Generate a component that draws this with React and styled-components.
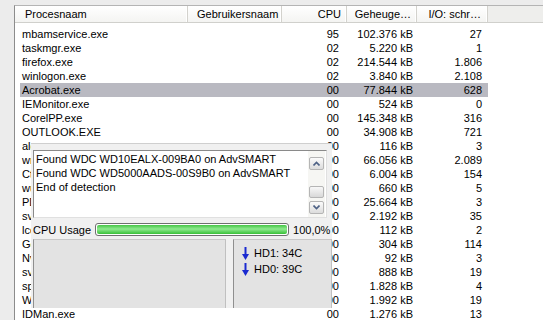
import React from "react";
import styled, { createGlobalStyle } from "styled-components";

const GlobalStyle = createGlobalStyle`
  html, body {
    margin: 0;
    padding: 0;
    background: #ececec;
    font-family: "Liberation Sans", Arial, sans-serif;
    font-size: 11px;
    color: #000;
    overflow: hidden;
  }
`;

const rows = [
  { name: "mbamservice.exe", cpu: "95", mem: "102.376 kB", io: "27" },
  { name: "taskmgr.exe", cpu: "02", mem: "5.220 kB", io: "1" },
  { name: "firefox.exe", cpu: "02", mem: "214.544 kB", io: "1.806" },
  { name: "winlogon.exe", cpu: "02", mem: "3.840 kB", io: "2.108" },
  { name: "Acrobat.exe", cpu: "00", mem: "77.844 kB", io: "628", selected: true },
  { name: "IEMonitor.exe", cpu: "00", mem: "524 kB", io: "0" },
  { name: "CorelPP.exe", cpu: "00", mem: "145.348 kB", io: "316" },
  { name: "OUTLOOK.EXE", cpu: "00", mem: "34.908 kB", io: "721" },
  { name: "alg.exe", cpu: "00", mem: "116 kB", io: "3" },
  { name: "wmiprvse.exe", cpu: "00", mem: "66.056 kB", io: "2.089" },
  { name: "Ctfmon.exe", cpu: "00", mem: "6.004 kB", io: "154" },
  { name: "wuauclt.exe", cpu: "00", mem: "660 kB", io: "5" },
  { name: "PDVDServ.exe", cpu: "00", mem: "25.664 kB", io: "3" },
  { name: "svchost.exe", cpu: "00", mem: "2.192 kB", io: "35" },
  { name: "lcdmon.exe", cpu: "00", mem: "112 kB", io: "2" },
  { name: "GoogleUpdate.exe", cpu: "00", mem: "304 kB", io: "114" },
  { name: "NvSvc32.exe", cpu: "00", mem: "92 kB", io: "3" },
  { name: "svchost.exe", cpu: "00", mem: "888 kB", io: "19" },
  { name: "spoolsv.exe", cpu: "00", mem: "1.828 kB", io: "4" },
  { name: "WLTRAY.EXE", cpu: "00", mem: "1.992 kB", io: "19" },
  { name: "IDMan.exe", cpu: "00", mem: "1.276 kB", io: "13" },
];

const log = [
  "Found WDC WD10EALX-009BA0 on AdvSMART",
  "Found WDC WD5000AADS-00S9B0 on AdvSMART",
  "End of detection",
];

const temps = ["HD1: 34C", "HD0: 39C"];

const Window = styled.div`
  position: relative;
  width: 543px;
  height: 320px;
  display: flex;
  padding-top: 5px;
  box-sizing: border-box;
`;

const LeftStrip = styled.div`
  width: 14px;
  flex-shrink: 0;
`;

const ListView = styled.div`
  flex: 1;
  background: #fff;
  border-left: 1px solid #8c8c8c;
  border-top: 1px solid #b4b4b4;
  overflow: hidden;
`;

const Header = styled.div`
  display: grid;
  grid-template-columns: 173px 94px 65px 70px 71px 1fr;
  height: 16px;
  border-bottom: 1px solid #d0d0cc;
  background: linear-gradient(#ffffff, #f4f4f2);
`;

const HeadCell = styled.div`
  position: relative;
  display: flex;
  align-items: center;
  justify-content: ${(p) => (p.$right ? "flex-end" : "flex-start")};
  padding: ${(p) => (p.$right ? `0 ${p.$pad}px 0 0` : `0 0 0 ${p.$pad}px`)};
  white-space: nowrap;
  border-right: ${(p) => (p.$filler ? "none" : "1px solid #d3d2cd")};
  background: ${(p) => (p.$filler ? "#eeeeec" : "transparent")};
  box-shadow: ${(p) => (p.$filler ? "none" : "inset -1px 0 0 #fff")};
`;

const Body = styled.div`
  padding-top: 4px;
`;

const Row = styled.div`
  display: grid;
  grid-template-columns: 168px 94px 65px 70px 71px;
  height: 14px;
  line-height: 14px;
  margin-left: 5px;
  width: 468px;
  background: ${(p) => (p.$selected ? "#b9b9c1" : "transparent")};
  white-space: nowrap;
`;

const Cell = styled.div`
  overflow: hidden;
  text-align: ${(p) => (p.$right ? "right" : "left")};
  padding: ${(p) => (p.$right ? `0 ${p.$pad}px 0 0` : `0 0 0 ${p.$pad}px`)};
`;

const Overlay = styled.div`
  position: absolute;
  left: 31px;
  top: 143px;
  width: 301px;
  height: 165px;
  background: #f0f0f0;
  border-top: 1px solid #cfcfcf;
  box-sizing: border-box;
  padding: 6px 0 0 2px;
  display: flex;
  flex-direction: column;
`;

const Memo = styled.div`
  width: 294px;
  height: 68px;
  box-sizing: border-box;
  background: #fff;
  border: 1px solid #8a8a8a;
  border-right-color: #e0e0e0;
  border-bottom-color: #e0e0e0;
  display: flex;
`;

const MemoText = styled.div`
  flex: 1;
  padding: 1px 2px;
  line-height: 14px;
  white-space: nowrap;
  overflow: hidden;
`;

const ScrollBar = styled.div`
  width: 17px;
  margin-right: 1px;
  background: #f6f6f3;
  display: flex;
  flex-direction: column;
  align-items: center;
  padding: 6px 0 3px;
  box-sizing: border-box;
`;

const ScrollBtn = styled.div`
  width: 15px;
  height: 13px;
  box-sizing: border-box;
  border: 1px solid #b5b5b5;
  border-radius: 2px;
  background: linear-gradient(#fbfbfb, #dcdcdc);
  display: flex;
  align-items: center;
  justify-content: center;
`;

const Thumb = styled.div`
  width: 15px;
  height: 12px;
  box-sizing: border-box;
  margin-top: auto;
  margin-bottom: 3px;
  border: 1px solid #b5b5b5;
  border-radius: 2px;
  background: linear-gradient(#f8f8f8, #d8d8d8);
`;

const UsageRow = styled.div`
  display: flex;
  align-items: center;
  height: 15px;
  margin-top: 4px;
  gap: 4px;
  white-space: nowrap;
`;

const Progress = styled.div`
  width: 194px;
  height: 13px;
  box-sizing: border-box;
  border: 1px solid #6f6f6f;
  border-radius: 3px;
  padding: 1px;
  background: #fff;
`;

const ProgressFill = styled.div`
  height: 100%;
  border-radius: 2px;
  background: linear-gradient(#45c545, #8ee98e 45%, #37c037);
`;

const Panels = styled.div`
  display: grid;
  grid-template-columns: 193px 99px;
  gap: 7px;
  margin-top: 2px;
  flex: 1;
`;

const Panel = styled.div`
  background: #e3e3e3;
  border-left: 1px solid #8f8f8f;
  border-top: 1px solid #c8c8c8;
  border-right: 1px solid #c0c0c0;
  padding: 6px 0 0 8px;
  display: flex;
  flex-direction: column;
  gap: 2px;
`;

const TempLine = styled.div`
  display: flex;
  align-items: center;
  gap: 5px;
  height: 14px;
`;

const Chevron = ({ up }) => (
  <svg width="7" height="5" viewBox="0 0 7 5">
    <path
      d={up ? "M0.5 4.5 L3.5 1.5 L6.5 4.5" : "M0.5 0.5 L3.5 3.5 L6.5 0.5"}
      fill="none"
      stroke="#4d6185"
      strokeWidth="1.6"
    />
  </svg>
);

const DownArrow = () => (
  <svg width="7" height="13" viewBox="0 0 7 13">
    <path d="M3.5 0 V9" stroke="#1a2ad0" strokeWidth="2" />
    <path d="M0 7 L3.5 13 L7 7 Z" fill="#1a2ad0" />
  </svg>
);

export default function App() {
  return (
    <>
      <GlobalStyle />
      <Window>
        <LeftStrip />
        <ListView>
          <Header>
            <HeadCell $pad={10}>Procesnaam</HeadCell>
            <HeadCell $pad={9}>Gebruikersnaam</HeadCell>
            <HeadCell $right $pad={5}>CPU</HeadCell>
            <HeadCell $right $pad={5}>Geheuge…</HeadCell>
            <HeadCell $right $pad={6}>I/O: schr…</HeadCell>
            <HeadCell $filler />
          </Header>
          <Body>
            {rows.map((r, i) => (
              <Row key={i} $selected={r.selected}>
                <Cell $pad={2}>{r.name}</Cell>
                <Cell />
                <Cell $right $pad={8}>{r.cpu}</Cell>
                <Cell $right $pad={4}>{r.mem}</Cell>
                <Cell $right $pad={6}>{r.io}</Cell>
              </Row>
            ))}
          </Body>
        </ListView>

        <Overlay>
          <Memo>
            <MemoText>
              {log.map((l) => (
                <div key={l}>{l}</div>
              ))}
            </MemoText>
            <ScrollBar>
              <ScrollBtn>
                <Chevron up />
              </ScrollBtn>
              <Thumb />
              <ScrollBtn>
                <Chevron />
              </ScrollBtn>
            </ScrollBar>
          </Memo>
          <UsageRow>
            <span>CPU Usage</span>
            <Progress>
              <ProgressFill style={{ width: "100%" }} />
            </Progress>
            <span>100,0%</span>
          </UsageRow>
          <Panels>
            <Panel />
            <Panel>
              {temps.map((t) => (
                <TempLine key={t}>
                  <DownArrow />
                  <span>{t}</span>
                </TempLine>
              ))}
            </Panel>
          </Panels>
        </Overlay>
      </Window>
    </>
  );
}
